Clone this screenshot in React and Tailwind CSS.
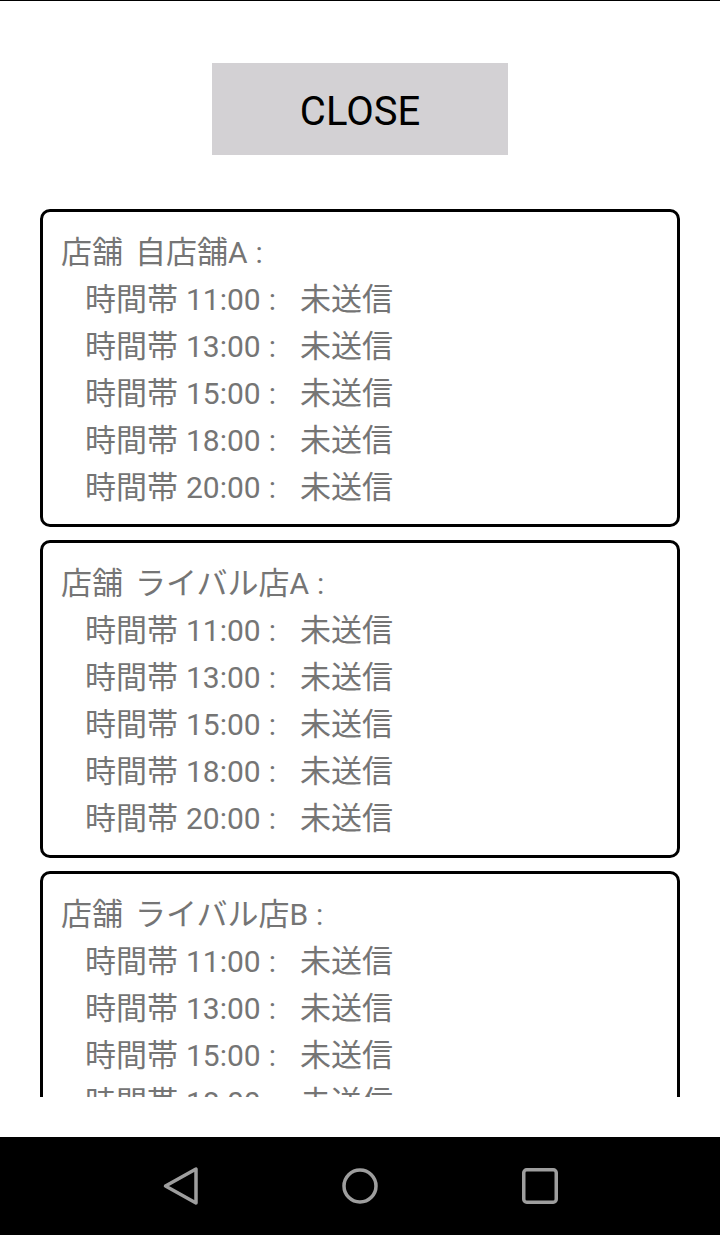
import React from "react";

const stores = [
  ["自店舗", "A"],
  ["ライバル店", "A"],
  ["ライバル店", "B"],
];
const times = ["11:00", "13:00", "15:00", "18:00", "20:00"];

function Card({ name, letter }) {
  return (
    <div className="mx-[40px] mb-[13px] shrink-0 rounded-[10px] border-[3px] border-black pl-[18px] pr-4 pt-[17px] pb-[13px] text-[30px] leading-[47px] text-[#757575]">
      <div className="flex items-baseline whitespace-pre">
        <span className="text-[31px]">店舗</span>
        <span className="ml-[12px] text-[31px]">{name}</span>
        <span>{letter}</span>
        <span className="ml-[8px]">:</span>
      </div>
      {times.map((t) => (
        <div key={t} className="flex items-baseline whitespace-pre pl-[24px]">
          <span className="text-[31px]">時間帯</span>
          <span className="ml-[8px]">{t}</span>
          <span className="ml-[8px]">:</span>
          <span className="ml-[24px] text-[31px]">未送信</span>
        </div>
      ))}
    </div>
  );
}

export default function App() {
  return (
    <div
      className="flex h-[1235px] w-[720px] flex-col overflow-hidden border-t border-black bg-white"
      style={{ fontFamily: 'Roboto, "Noto Sans CJK JP", sans-serif' }}
    >
      <div className="flex h-[1096px] shrink-0 flex-col overflow-hidden">
        <div className="flex justify-center pt-[62px]">
          <button className="flex h-[92px] w-[296px] items-center justify-center bg-[#d3d1d4] pt-[5px] text-[40px] leading-none text-black">
            CLOSE
          </button>
        </div>
        <div className="mt-[54px] flex flex-col">
          {stores.map(([n, l]) => (
            <Card key={n + l} name={n} letter={l} />
          ))}
        </div>
      </div>
      <div className="h-[40px] shrink-0" />
      <div className="flex h-[98px] shrink-0 items-center justify-center bg-black">
        <div className="flex w-[400px] items-center justify-between">
          <svg width="40" height="40" viewBox="0 0 40 40">
            <path
              d="M5.5 20 L36 3 L36 37 Z"
              fill="none"
              stroke="#9e9e9e"
              strokeWidth="3.5"
              strokeLinejoin="round"
            />
          </svg>
          <svg width="40" height="40" viewBox="0 0 40 40">
            <circle cx="20" cy="20" r="16" fill="none" stroke="#9e9e9e" strokeWidth="3.5" />
          </svg>
          <svg width="40" height="40" viewBox="0 0 40 40">
            <rect x="3.75" y="3.75" width="32.5" height="32.5" rx="3" fill="none" stroke="#9e9e9e" strokeWidth="3.5" />
          </svg>
        </div>
      </div>
    </div>
  );
}
